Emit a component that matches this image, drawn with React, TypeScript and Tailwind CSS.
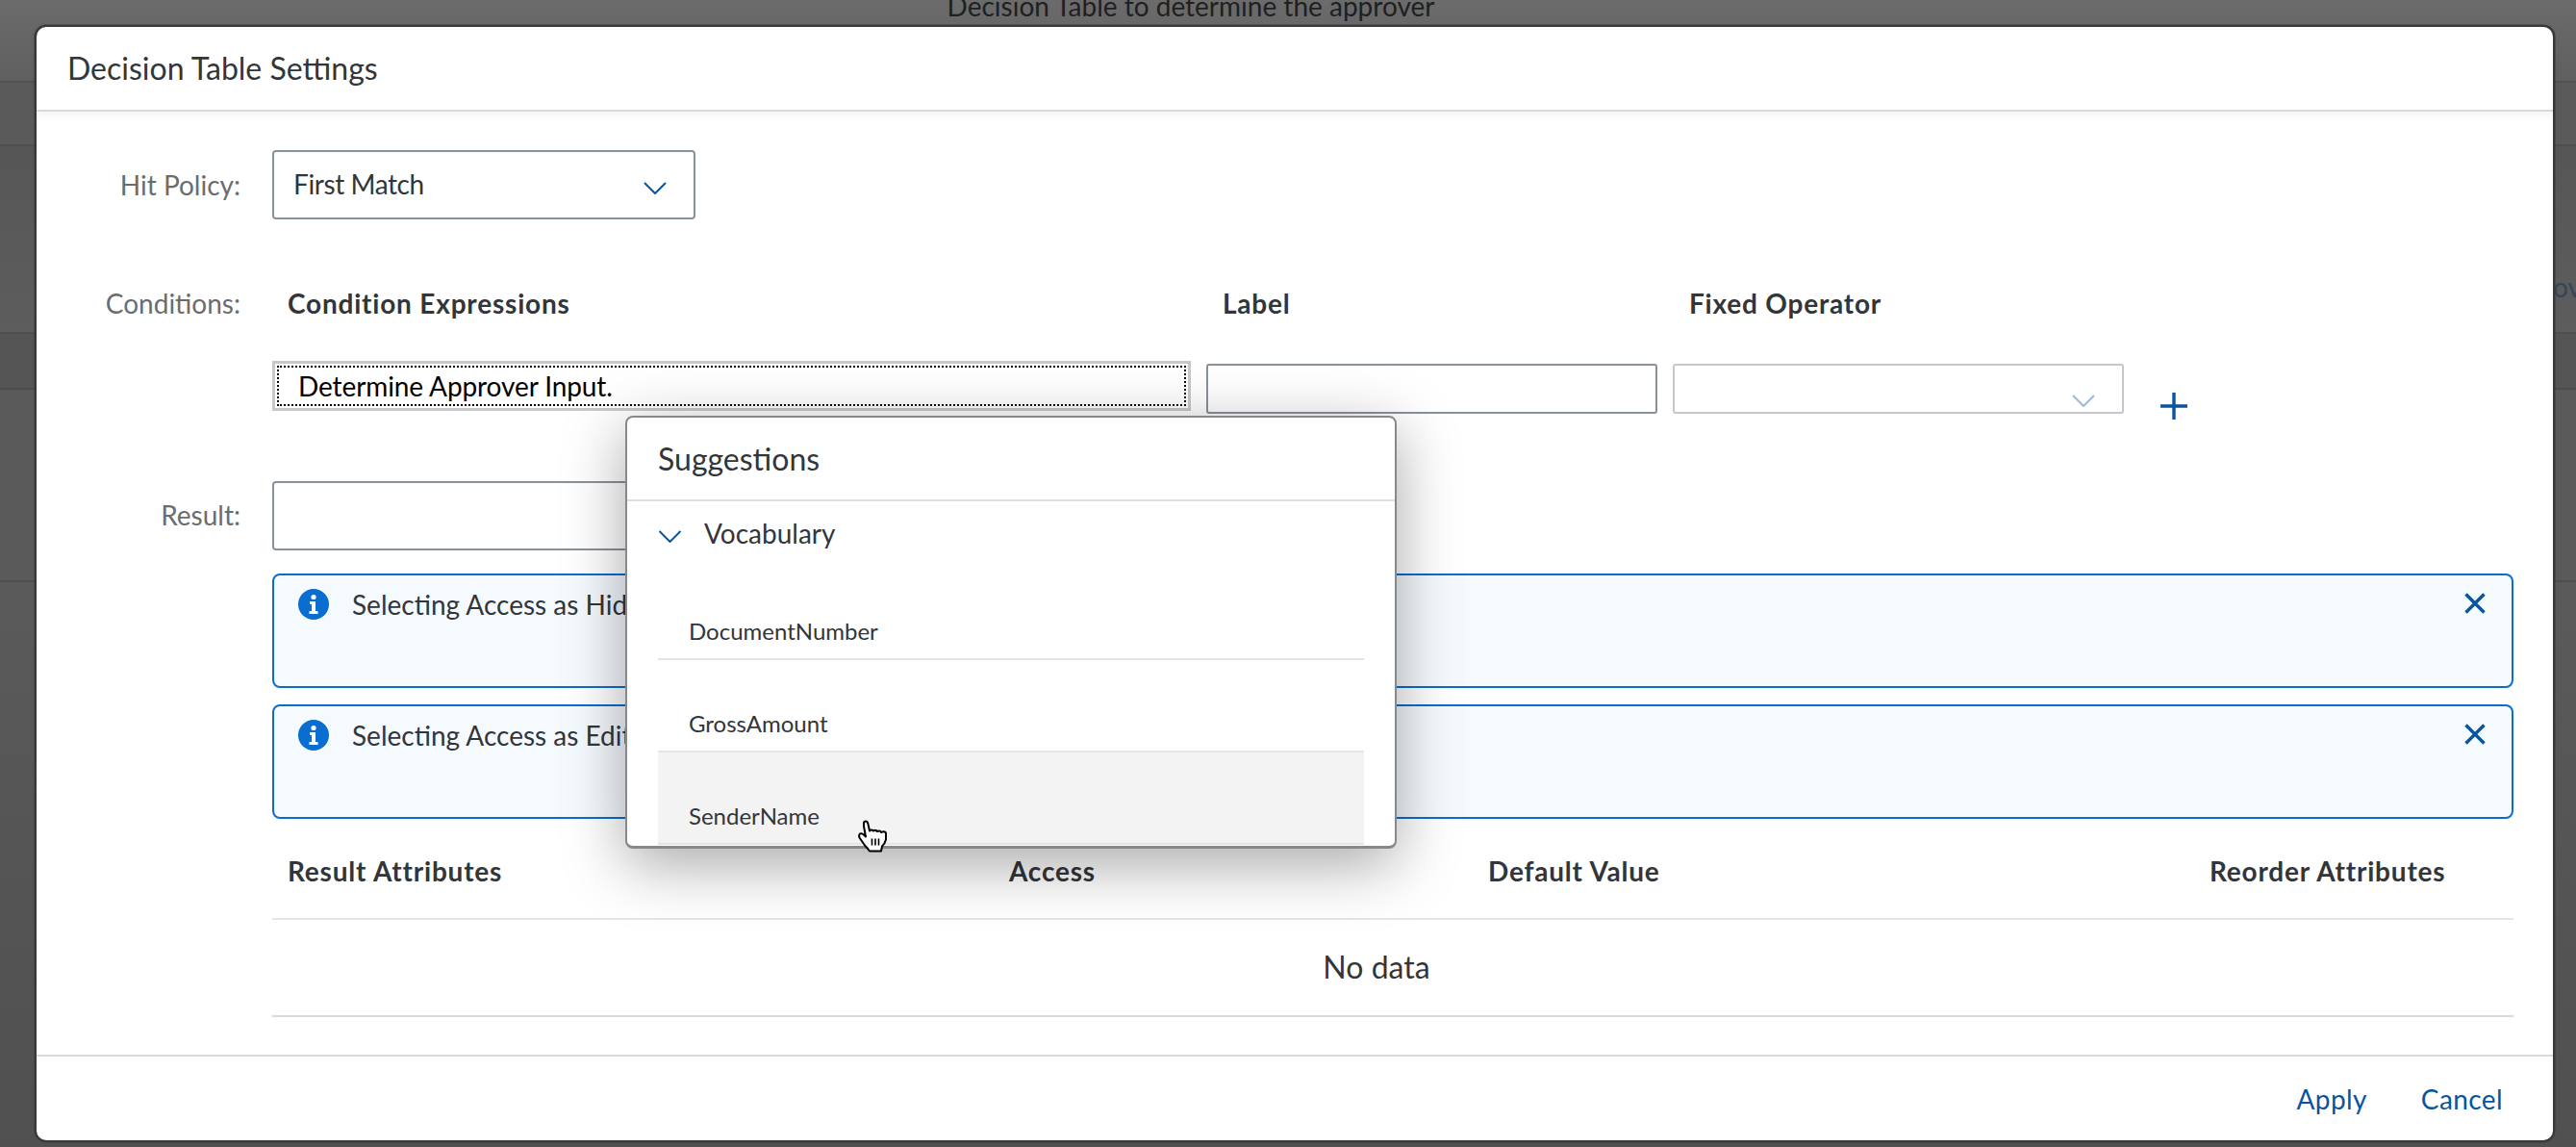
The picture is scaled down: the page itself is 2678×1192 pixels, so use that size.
import React from "react";

function Chevron({ className }: { className: string }) {
  return (
    <svg viewBox="0 0 24 13" fill="none" className={className}>
      <path d="M1 1 L12 12 L23 1" stroke="currentColor" strokeWidth="2" />
    </svg>
  );
}

function InfoIcon() {
  return (
    <svg viewBox="0 0 32 32" className="w-[32px] h-[32px] shrink-0">
      <circle cx="16" cy="16" r="16" fill="#0a6ed1" />
      <circle cx="16" cy="8.5" r="2.6" fill="#fff" />
      <path d="M12 13 H18 V23 H20.5 V26 H11.5 V23 H14 V16 H12 Z" fill="#fff" />
    </svg>
  );
}

function CloseIcon() {
  return (
    <svg viewBox="0 0 24 24" className="w-[24px] h-[24px]" fill="none">
      <path d="M2.5 2.5 L21.5 21.5 M21.5 2.5 L2.5 21.5" stroke="#0854a0" strokeWidth="3.4" />
    </svg>
  );
}

function HandCursor() {
  return (
    <svg viewBox="0 0 30 33" className="absolute left-[854px] top-[824px] w-[30px] h-[34px] z-20">
      <path
        d="M6 3 Q6 1 8 1 Q10 1 10.5 4 L12 11 Q14 9 16 11 Q18 9.5 20 11.5 Q23 10 24 12.5 Q27 11 29 13 L29 20 Q28 24 25 27 L24 32 L12 32 Q10 29 7 26 L1.5 18 Q0.5 15 2 14 Q4 13 6 15 L8 17 L6 6 Z"
        fill="#fff"
        stroke="#000"
        strokeWidth="2"
        strokeLinejoin="round"
      />
      <path d="M14.5 19 V26 M18 19 V26 M21.5 19 V26" stroke="#000" strokeWidth="1.6" />
    </svg>
  );
}

function Banner({ text, className }: { text: string; className: string }) {
  return (
    <div className={`h-[119px] rounded-[8px] border-[2.5px] border-[#0a6ed1] bg-[#f5faff] flex items-start pl-[25px] pr-[26px] pt-[14px] ${className}`}>
      <InfoIcon />
      <div className="ml-[24px] flex-1 text-[28px] leading-[32px] text-[#32363a] whitespace-nowrap">{text}</div>
      <div className="pt-[3px]">
        <CloseIcon />
      </div>
    </div>
  );
}

function SuggestionRow({ text, hover }: { text: string; hover?: boolean }) {
  return (
    <div className={`h-[96px] flex items-end pl-[32px] pb-[12px] text-[24px] leading-[32px] text-[#32363a] border-b-2 ${hover ? "bg-[#f3f3f3] border-[#e5e5e5]" : "border-[#e5e5e5]"}`}>
      {text}
    </div>
  );
}

export default function App() {
  return (
    <div className="relative w-[2678px] h-[1192px] overflow-hidden bg-[#585858] font-['Lato',sans-serif]">
      {/* dimmed page behind the dialog */}
      <div className="absolute inset-0 flex flex-col">
        <div className="h-[86px] bg-gradient-to-b from-[#6b6b6b] to-[#5f5f5f] border-b-2 border-[#525252] relative">
          <div className="absolute left-0 right-0 top-[-10px] text-center pr-[202px] text-[28px] leading-[32px] text-[#1f2022]">Decision Table to determine the approver</div>
        </div>
        <div className="h-[66px] bg-[#5a5a5a] border-b-2 border-[#4e4e4e]" />
        <div className="h-[195px] bg-gradient-to-b from-[#565656] to-[#5d5d5d] border-b-2 border-[#4e4e4e] flex justify-end items-end">
          <span className="text-[28px] leading-[32px] pb-[31px] mr-[-6px] text-[#34465c]">ov</span>
        </div>
        <div className="h-[58px] bg-[#555555] border-b-2 border-[#4c4c4c]" />
        <div className="h-[200px] bg-[#5a5a5a] border-b-2 border-[#4e4e4e]" />
        <div className="flex-1 bg-gradient-to-b from-[#5a5a5a] to-[#505050]" />
      </div>

      <div className="relative pt-[28px] pl-[38px]">
        <div className="relative w-[2616px] h-[1157px] bg-white rounded-[10px] flex flex-col shadow-[0_0_0_2.5px_#3a3a3a]">
          {/* header */}
          <div className="h-[88px] shrink-0 flex items-center pl-[32px] border-b-2 border-[#d9d9d9] shadow-[0_4px_8px_rgba(0,0,0,0.05)] text-[32px] leading-[40px] text-[#32363a]">
            Decision Table Settings
          </div>

          {/* body */}
          <div className="flex-1 flex flex-col pr-[41px]">
            <div className="mt-[40px] flex items-center">
              <div className="w-[212px] text-right text-[28px] text-[#6a6d70]">Hit Policy:</div>
              <div className="ml-[33px] w-[440px] h-[72px] border-2 border-[#89919a] rounded-[4px] flex items-center justify-between pl-[20px] pr-[28px] text-[28px] text-[#32363a]">
                <span className="pb-[2px] tracking-[-0.4px]">First Match</span>
                <Chevron className="w-[24px] h-[13px] text-[#0854a0] mt-[6px]" />
              </div>
            </div>

            <div className="mt-[67px] h-[40px] flex items-center text-[28px]">
              <div className="w-[212px] text-right text-[#6a6d70]">Conditions:</div>
              <div className="ml-[49px] w-[972px] font-bold tracking-[0.8px] text-[#32363a]">Condition Expressions</div>
              <div className="w-[485px] font-bold tracking-[0.8px] text-[#32363a]">Label</div>
              <div className="font-bold tracking-[0.8px] text-[#32363a]">Fixed Operator</div>
            </div>

            <div className="mt-[40px] flex items-start pl-[245px]">
              <div className="w-[955px] h-[52px] border-[3px] border-[#c8c8c8] p-[2px]">
                <div className="h-full border-2 border-dotted border-black flex items-center pl-[20px] text-[28px] tracking-[-0.1px] text-black">
                  Determine Approver Input.
                </div>
              </div>
              <div className="ml-[16px] mt-[3px] w-[469px] h-[52px] rounded-[3px] border-2 border-[#89919a] bg-white" />
              <div className="ml-[16px] mt-[3px] w-[469px] h-[52px] rounded-[3px] border-2 border-[#c4c8cc] bg-white flex justify-end items-end pr-[28px] pb-[5px]">
                <Chevron className="w-[24px] h-[13px] text-[#9db8d8]" />
              </div>
              <svg viewBox="0 0 28 28" className="ml-[38px] mt-[33px] w-[28px] h-[28px]" fill="none">
                <path d="M14 0 V28 M0 14 H28" stroke="#0854a0" strokeWidth="3.4" />
              </svg>
            </div>

            <div className="mt-[64px] flex items-center">
              <div className="w-[212px] text-right text-[28px] text-[#6a6d70] pb-[2px]">Result:</div>
              <div className="ml-[33px] w-[440px] h-[72px] border-2 border-[#89919a] rounded-[4px]" />
            </div>

            <div className="ml-[245px] mt-[24px]">
              <Banner text="Selecting Access as Hidden" className="" />
              <Banner text="Selecting Access as Editable" className="mt-[17px]" />
              <div className="h-[105px] border-b-2 border-[#e5e5e5] flex items-center pl-[16px] pt-[4px] text-[28px] font-bold tracking-[0.8px] text-[#32363a]">
                <div className="w-[750px]">Result Attributes</div>
                <div className="w-[498px]">Access</div>
                <div className="w-[750px]">Default Value</div>
                <div>Reorder Attributes</div>
              </div>
              <div className="h-[101px] border-b-2 border-[#d9d9d9] flex items-center justify-center pr-[34px] pb-[2px] text-[32px] text-[#32363a]">No data</div>
            </div>
          </div>

          {/* footer */}
          <div className="h-[89px] shrink-0 border-t-2 border-[#d9d9d9] flex items-center justify-end pr-[52px] gap-[56px] text-[28px] tracking-[0.4px] text-[#0854a0]">
            <span>Apply</span>
            <span>Cancel</span>
          </div>

          {/* suggestions popover */}
          <div className="absolute left-[612px] top-[404px] w-[802px] h-[450px] z-10 bg-white rounded-[8px] border-2 border-b-[3px] border-[#85898e] overflow-hidden shadow-[0_16px_64px_rgba(0,0,0,0.35)]">
            <div className="h-[87px] border-b-2 border-[#e0e0e0] flex items-center pl-[32px] text-[32px] text-[#32363a]">Suggestions</div>
            <div className="h-[66px] flex items-center pl-[32px] text-[28px] text-[#32363a]">
              <Chevron className="w-[25px] h-[13px] text-[#0854a0] mt-[6px]" />
              <span className="ml-[23px]">Vocabulary</span>
            </div>
            <div className="mx-[32px] mt-[3px]">
              <SuggestionRow text="DocumentNumber" />
              <SuggestionRow text="GrossAmount" />
              <SuggestionRow text="SenderName" hover />
            </div>
          </div>
          <HandCursor />
        </div>
      </div>
    </div>
  );
}
